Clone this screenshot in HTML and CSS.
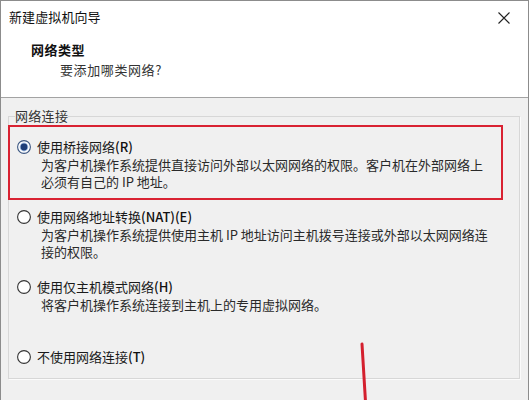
FILE: index.html
```html
<!DOCTYPE html>
<html lang="zh-CN">
<head>
<meta charset="utf-8">
<title>新建虚拟机向导</title>
<link rel="stylesheet" href="styles.css">
</head>
<body>
<div class="window">
  <div class="titlebar">
    <span class="title">新建虚拟机向导</span>
    <svg class="close" width="12" height="12" viewBox="0 0 12 12"><path d="M0.5 0.5L11.5 11.5M11.5 0.5L0.5 11.5" stroke="#222" stroke-width="1.1" fill="none"/></svg>
  </div>
  <div class="header">
    <div class="h-title">网络类型</div>
    <div class="h-sub">要添加哪类网络?</div>
  </div>
  <div class="body">
    <fieldset class="group">
      <legend class="legend">网络连接</legend>
      <div class="option">
        <div class="opt-label">
          <svg class="radio" width="14" height="14" viewBox="0 0 14 14"><circle cx="7" cy="7" r="6.4" fill="#fff" stroke="#3a5580" stroke-width="1.1"/><circle cx="7" cy="7" r="4.4" fill="#a9c3e6"/><circle cx="7" cy="7" r="3.4" fill="#1d3d78"/></svg>
          <span>使用桥接网络<b class="acc">(R)</b></span>
        </div>
        <div class="opt-desc">为客户机操作系统提供直接访问外部以太网网络的权限。客户机在外部网络上<br>必须有自己的 IP 地址。</div>
      </div>
      <div class="option">
        <div class="opt-label">
          <svg class="radio" width="14" height="14" viewBox="0 0 14 14"><circle cx="7" cy="7" r="6.4" fill="#fff" stroke="#333" stroke-width="1.1"/></svg>
          <span>使用网络地址转换<b class="acc">(NAT)(E)</b></span>
        </div>
        <div class="opt-desc">为客户机操作系统提供使用主机 IP 地址访问主机拨号连接或外部以太网网络连<br>接的权限。</div>
      </div>
      <div class="option">
        <div class="opt-label">
          <svg class="radio" width="14" height="14" viewBox="0 0 14 14"><circle cx="7" cy="7" r="6.4" fill="#fff" stroke="#333" stroke-width="1.1"/></svg>
          <span>使用仅主机模式网络<b class="acc">(H)</b></span>
        </div>
        <div class="opt-desc">将客户机操作系统连接到主机上的专用虚拟网络。</div>
      </div>
      <div class="option last">
        <div class="opt-label">
          <svg class="radio" width="14" height="14" viewBox="0 0 14 14"><circle cx="7" cy="7" r="6.4" fill="#fff" stroke="#333" stroke-width="1.1"/></svg>
          <span>不使用网络连接<b class="acc">(T)</b></span>
        </div>
      </div>
    </fieldset>
  </div>
  <div class="mark-box"></div>
  <svg class="mark-line" width="20" height="70" viewBox="0 0 20 70"><path d="M6 2L10 68" stroke="#d4202e" stroke-width="3" stroke-linecap="round" fill="none"/></svg>
</div>
</body>
</html>
```

FILE: styles.css
```css
html, body {
  margin: 0;
  padding: 0;
  background: #f0f0f0;
}
.window {
  position: relative;
  width: 527px;
  height: 399px;
  border: 1px solid #8c8c8c;
  border-bottom: none;
  background: #f0f0f0;
  font-family: "Noto Sans CJK SC", "Noto Sans", sans-serif;
  font-size: 13px;
  color: #1a1a1a;
  overflow: hidden;
}
.titlebar {
  height: 31px;
  background: #fff;
  display: flex;
  align-items: center;
  justify-content: space-between;
  padding: 0 18px 0 8px;
}
.title {
  font-size: 13px;
  line-height: 18px;
  color: #111;
  letter-spacing: 0.1px;
  margin-top: 1px;
}
.close {
  display: block;
  margin-top: 2px;
}
.header {
  height: 66px;
  background: #fff;
  border-bottom: 1px solid #a3a3a3;
  padding-left: 30px;
  box-sizing: border-box;
  padding-top: 9px;
}
.h-title {
  font-weight: bold;
  line-height: 18px;
  font-size: 13px;
  letter-spacing: 0.5px;
  color: #111;
}
.h-sub {
  margin-top: 2px;
  padding-left: 29px;
  line-height: 18px;
  color: #333;
  letter-spacing: 0.6px;
}
.body {
  padding: 9px 8px 0 7px;
}
.group {
  margin: 0;
  padding: 13px 0 12px 6px;
  border: 1px solid #d7d7d7;
  box-shadow: 1px 1px 0 #fbfbfb;
}
.legend {
  padding: 0;
  line-height: 18px;
  color: #333;
  letter-spacing: 0.3px;
}
.option {
  height: 70px;
  margin-left: 2px;
  line-height: 17.5px;
}
.option.last {
  height: 17.5px;
}
.opt-label {
  display: flex;
  align-items: center;
  gap: 6px;
  color: #1a1a1a;
}
.acc {
  font-weight: 500;
  color: #111;
}
.radio {
  display: block;
  flex: none;
}
.opt-desc {
  padding-left: 24px;
  color: #2a2a2a;
  white-space: nowrap;
}
.mark-box {
  position: absolute;
  left: 7px;
  top: 124px;
  width: 495px;
  height: 75px;
  box-sizing: border-box;
  border: 2px solid #d92232;
}
.mark-line {
  position: absolute;
  left: 355px;
  top: 341px;
}
```
